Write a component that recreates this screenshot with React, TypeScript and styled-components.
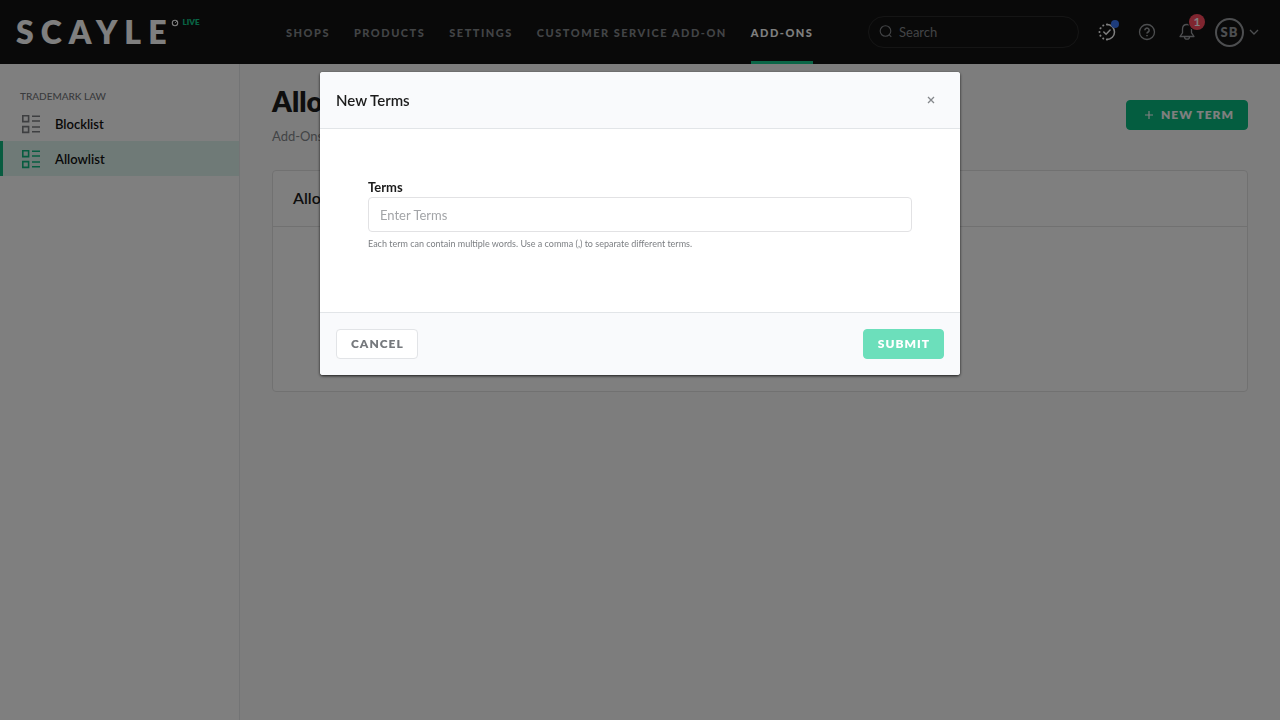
import React from "react";
import styled, { createGlobalStyle } from "styled-components";

const GlobalStyle = createGlobalStyle`
  *, *::before, *::after { box-sizing: border-box; }
  body {
    margin: 0;
    background: #fbfbfb;
    color: #1c1c1c;
    font-family: Lato, "Liberation Sans", sans-serif;
    font-size: 13px;
    line-height: 20px;
  }
  h1, h2, p, ul { margin: 0; padding: 0; }
  ul { list-style: none; }
  a { color: inherit; text-decoration: none; }
  button, input { font-family: inherit; }
`;

const Page = styled.div`
  min-height: 100vh;
  display: flex;
  flex-direction: column;
`;

const TopBar = styled.header`
  height: 64px;
  flex: none;
  display: flex;
  align-items: center;
  padding: 0 20px 0 16px;
  background: #131313;
`;

const Brand = styled.a`
  width: 270px;
  flex: none;
  display: flex;
  align-items: flex-start;
  color: #fff;
`;

const Wordmark = styled.span`
  margin-right: -3px;
  font-size: 32px;
  line-height: 32px;
  font-weight: 800;
  letter-spacing: 7px;
`;

const LiveTag = styled.span`
  margin-left: 4px;
  font-size: 8px;
  line-height: 12px;
  font-weight: 800;
  color: #10c78a;
`;

const Nav = styled.nav`
  align-self: stretch;
  display: flex;
  gap: 24px;
`;

const NavLink = styled.a<{ $active?: boolean }>`
  display: flex;
  align-items: center;
  padding-top: 4px;
  border-bottom: 3px solid ${(p) => (p.$active ? "#14cc8e" : "transparent")};
  color: ${(p) => (p.$active ? "#fff" : "#85888c")};
  font-size: 11px;
  font-weight: 900;
  letter-spacing: 1.5px;
  white-space: nowrap;
`;

const Search = styled.label`
  width: 211px;
  height: 32px;
  margin-left: auto;
  display: flex;
  align-items: center;
  gap: 6px;
  padding: 0 10px;
  border: 1px solid #2b2b2b;
  border-radius: 16px;
  color: #85888c;
`;

const SearchInput = styled.input`
  flex: 1;
  min-width: 0;
  padding: 0;
  border: 0;
  outline: 0;
  background: transparent;
  color: inherit;
  font-size: 13px;
  &::placeholder { color: #85888c; opacity: 1; }
`;

const Tools = styled.div`
  display: flex;
  align-items: center;
  gap: 16px;
  margin-left: 16px;
`;

const IconButton = styled.button<{ $bright?: boolean }>`
  position: relative;
  width: 24px;
  height: 24px;
  padding: 0;
  display: flex;
  align-items: center;
  justify-content: center;
  border: 0;
  background: transparent;
  color: ${(p) => (p.$bright ? "#fff" : "#9a9da0")};
`;

const CloseButton = styled(IconButton)`
  margin-right: 1px;
  color: #85888c;
`;

const Dot = styled.span`
  position: absolute;
  top: 0;
  right: 0;
  width: 8px;
  height: 8px;
  border-radius: 50%;
  background: #3a78f8;
`;

const Count = styled.span`
  position: absolute;
  top: -6px;
  right: -6px;
  width: 16px;
  height: 16px;
  border-radius: 50%;
  background: #ff4a5f;
  box-shadow: 0 0 0 1px #131313;
  color: #fff;
  font-size: 12px;
  line-height: 16px;
  font-weight: 700;
  text-align: center;
`;

const Account = styled.button`
  display: flex;
  align-items: center;
  gap: 4px;
  padding: 0;
  border: 0;
  background: transparent;
  color: #9a9da0;
`;

const Avatar = styled.span`
  width: 29px;
  height: 29px;
  border: 2px solid #9a9da0;
  border-radius: 50%;
  font-size: 13px;
  line-height: 25px;
  font-weight: 800;
  letter-spacing: 1px;
  text-align: center;
`;

const Columns = styled.div`
  flex: 1;
  display: flex;
`;

const Sidebar = styled.aside`
  width: 240px;
  flex: none;
  padding-top: 24px;
  background: #fff;
  border-right: 1px solid #e6e8ea;
`;

const SideHeading = styled.p`
  margin-bottom: 2px;
  padding-left: 20px;
  font-size: 10px;
  line-height: 16px;
  font-weight: 500;
  color: #73767a;
`;

const SideLink = styled.a<{ $active?: boolean }>`
  height: 35px;
  display: flex;
  align-items: center;
  gap: 14px;
  padding-left: 18px;
  border-left: 3px solid ${(p) => (p.$active ? "#10b981" : "transparent")};
  background: ${(p) => (p.$active ? "#dff5ee" : "transparent")};
  font-size: 13px;
  font-weight: 600;
  color: #111;
  svg { color: ${(p) => (p.$active ? "#10b981" : "#7c7f83")}; }
`;

const Main = styled.main`
  flex: 1;
  min-width: 0;
  padding: 20px 32px;
`;

const PageHead = styled.div`
  display: flex;
  justify-content: space-between;
  align-items: center;
  margin-bottom: 24px;
`;

const Title = styled.h1`
  font-size: 28px;
  line-height: 34px;
  font-weight: 800;
`;

const Crumbs = styled.p`
  margin-top: 8px;
  color: #85888c;
`;

const Button = styled.button<{ $kind: "primary" | "plain" | "faded" }>`
  height: 30px;
  display: flex;
  align-items: center;
  gap: 4px;
  padding: 0 13px 2px 14px;
  border-radius: 4px;
  border: 1px solid ${(p) => ({ primary: "#09bb80", plain: "#e2e4e7", faded: "#6cdfbb" })[p.$kind]};
  background: ${(p) => ({ primary: "#09bb80", plain: "#fff", faded: "#6cdfbb" })[p.$kind]};
  color: ${(p) => (p.$kind === "plain" ? "#76797d" : "#fff")};
  font-size: 12px;
  font-weight: 800;
  letter-spacing: 1px;
`;

const Card = styled.section`
  height: 222px;
  border: 1px solid #e2e2e3;
  border-radius: 4px;
  background: #fff;
`;

const CardTitle = styled.h2`
  height: 56px;
  padding: 0 20px;
  border-bottom: 1px solid #e2e2e3;
  font-size: 16px;
  line-height: 54px;
  font-weight: 600;
`;

const Overlay = styled.div`
  position: fixed;
  inset: 0;
  display: flex;
  justify-content: center;
  align-items: flex-start;
  padding-top: 72px;
  background: rgba(0, 0, 0, 0.5);
`;

const Dialog = styled.form`
  width: 50%;
  min-width: 480px;
  border-radius: 3px;
  overflow: hidden;
  background: #fff;
  box-shadow: 0 1px 3px rgba(0, 0, 0, 0.8);
`;

const DialogHead = styled.header`
  height: 57px;
  display: flex;
  align-items: center;
  justify-content: space-between;
  padding: 0 16px;
  border-bottom: 1px solid #e2e5e8;
  background: #f9fafc;
`;

const DialogTitle = styled.h2`
  font-size: 15px;
  font-weight: 600;
`;

const DialogBody = styled.div`
  padding: 48px 48px 60px;
  display: flex;
  flex-direction: column;
`;

const FieldLabel = styled.label`
  font-size: 13px;
  font-weight: 700;
`;

const TextField = styled.input`
  width: 100%;
  height: 35px;
  padding: 0 11px;
  border: 1px solid #e2e2e4;
  border-radius: 4px;
  outline: 0;
  font-size: 13px;
  &::placeholder { color: #a3a5a8; opacity: 1; }
`;

const Hint = styled.p`
  margin-top: 4px;
  font-size: 9px;
  line-height: 16px;
  color: #7c7f83;
`;

const DialogFoot = styled.footer`
  display: flex;
  justify-content: space-between;
  padding: 16px;
  border-top: 1px solid #e2e5e8;
  background: #f9fafc;
`;

const Ring = () => (
  <svg width="8" height="14" viewBox="0 0 8 14" fill="none" stroke="currentColor" aria-hidden="true">
    <circle cx="4" cy="7" r="2.7" strokeWidth="1.1" />
    <path d="M4 7l2-2" strokeWidth=".8" />
  </svg>
);

const ListIcon = () => (
  <svg width="20" height="20" viewBox="0 0 20 20" fill="none" stroke="currentColor" strokeWidth="1.6" aria-hidden="true">
    <path d="M1.800 1.800h5.800v5.800H1.800zM1.800 12.600h5.800v5.800H1.800z" />
    <path d="M11 2.300h8M11 7h8M11 13h8M11 17.800h8" />
  </svg>
);

export default function App() {
  return (
    <>
      <GlobalStyle />
      <Page>
        <TopBar>
          <Brand href="#">
            <Wordmark>SCAYLE</Wordmark>
            <Ring />
            <LiveTag>LIVE</LiveTag>
          </Brand>
          <Nav>
            {["Shops", "Products", "Settings", "Customer Service Add-On", "Add-Ons"].map((name) => (
              <NavLink key={name} href="#" $active={name === "Add-Ons"}>
                {name.toUpperCase()}
              </NavLink>
            ))}
          </Nav>
          <Search>
            <svg width="14" height="14" viewBox="0 0 14 14" fill="none" stroke="currentColor" strokeWidth="1.1" aria-hidden="true">
              <circle cx="6.5" cy="6" r="5.3" />
              <path d="M10.3 9.8l2 2" />
            </svg>
            <SearchInput type="search" placeholder="Search" aria-label="Search" />
          </Search>
          <Tools>
            <IconButton $bright aria-label="Tasks">
              <svg width="18" height="18" viewBox="0 0 18 18" fill="none" stroke="currentColor" strokeWidth="1.5" strokeLinecap="round" aria-hidden="true">
                <path d="M9 1.5a7.5 7.5 0 0 1 0 15" />
                <path d="M9 16.5a7.5 7.5 0 0 1 0-15" strokeDasharray="0.1 3.8" strokeWidth="2" />
                <path d="M5.8 9l2.3 2.2 4-4.2" />
              </svg>
              <Dot />
            </IconButton>
            <IconButton aria-label="Help">
              <svg width="18" height="18" viewBox="0 0 18 18" fill="none" stroke="currentColor" strokeWidth="1.3" aria-hidden="true">
                <circle cx="9" cy="9" r="7.5" />
                <path d="M6.9 7.2a2.1 2.1 0 1 1 3.2 1.8c-.8.5-1.1.8-1.1 1.6M9 11.9v1.4" strokeWidth="1.6" />
              </svg>
            </IconButton>
            <IconButton aria-label="Notifications">
              <svg width="18" height="18" viewBox="0 0 18 18" fill="none" stroke="currentColor" strokeWidth="1.3" strokeLinejoin="round" aria-hidden="true">
                <path d="M9 1.5c-2.700 0-4.500 2-4.500 4.700v3.600L2 13.500h14l-2.500-3.700V6.200C13.500 3.500 11.700 1.500 9 1.500z" />
                <path d="M6.500 13.700a2.500 2.500 0 0 0 5 0" />
              </svg>
              <Count>1</Count>
            </IconButton>
            <Account aria-label="Account menu">
              <Avatar>SB</Avatar>
              <svg width="12" height="12" viewBox="0 0 12 12" fill="none" stroke="currentColor" strokeWidth="1.3" aria-hidden="true">
                <path d="M2 4l4 4 4-4" />
              </svg>
            </Account>
          </Tools>
        </TopBar>
        <Columns>
          <Sidebar>
            <SideHeading>TRADEMARK LAW</SideHeading>
            <ul>
              {["Blocklist", "Allowlist"].map((name) => (
                <li key={name}>
                  <SideLink href="#" $active={name === "Allowlist"}>
                    <ListIcon />
                    {name}
                  </SideLink>
                </li>
              ))}
            </ul>
          </Sidebar>
          <Main>
            <PageHead>
              <div>
                <Title>Allowlist</Title>
                <Crumbs>Add-Ons</Crumbs>
              </div>
              <Button type="button" $kind="primary">
                <svg width="16" height="16" viewBox="0 0 16 16" fill="none" stroke="currentColor" strokeWidth="1.2" aria-hidden="true">
                  <path d="M8 5v8M4 9h8" />
                </svg>
                NEW TERM
              </Button>
            </PageHead>
            <Card>
              <CardTitle>Allowlist</CardTitle>
            </Card>
          </Main>
        </Columns>
      </Page>
      <Overlay>
        <Dialog role="dialog" aria-labelledby="dialog-title" onSubmit={(e) => e.preventDefault()}>
          <DialogHead>
            <DialogTitle id="dialog-title">New Terms</DialogTitle>
            <CloseButton type="button" aria-label="Close">
              <svg width="8" height="8" viewBox="0 0 8 8" fill="none" stroke="currentColor" strokeWidth="1.3" aria-hidden="true">
                <path d="M1 1l6 6M7 1L1 7" />
              </svg>
            </CloseButton>
          </DialogHead>
          <DialogBody>
            <FieldLabel htmlFor="terms">Terms</FieldLabel>
            <TextField id="terms" type="text" placeholder="Enter Terms" />
            <Hint>Each term can contain multiple words. Use a comma (,) to separate different terms.</Hint>
          </DialogBody>
          <DialogFoot>
            <Button type="button" $kind="plain">CANCEL</Button>
            <Button type="submit" $kind="faded">SUBMIT</Button>
          </DialogFoot>
        </Dialog>
      </Overlay>
    </>
  );
}
